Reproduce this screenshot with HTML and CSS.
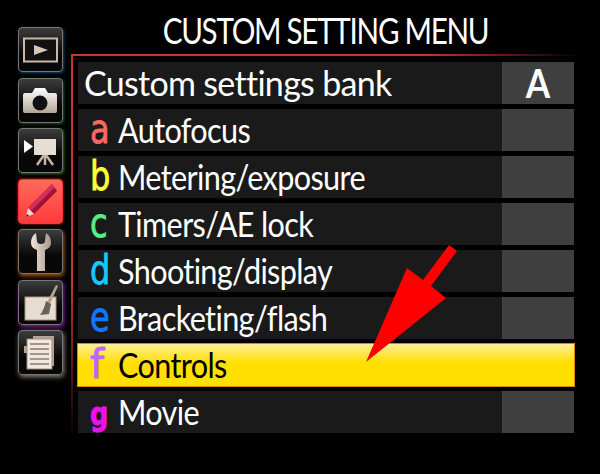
FILE: index.html
```html
<!DOCTYPE html>
<html lang="en">
<head>
  <meta charset="UTF-8" />
  <meta name="viewport" content="width=device-width, initial-scale=1.0"/>
  <title>Custom Setting Menu</title>
  <link rel="stylesheet" href="styles.css">
</head>
<body>
  <div class="screen">
    <!-- Menu tabs -->
    <div class="tabs">
      <div class="tab tab-play">
        <svg viewBox="0 0 43 43"><rect x="5" y="10.500" width="33" height="23" fill="#111" stroke="#cdb8a8" stroke-width="2"/><path d="M15 17 L29 22 L15 27Z" fill="#d8c6b6"/></svg>
      </div>
      <div class="tab tab-shoot">
        <svg viewBox="0 0 43 43"><defs><linearGradient id="metal" x1="0" y1="0" x2="0" y2="1"><stop offset="0" stop-color="#fff"/><stop offset="1" stop-color="#b5a594"/></linearGradient></defs><path d="M6 14 H13 L16 9 H26 L29 14 H36 Q38 14 38 16 V32 Q38 34 36 34 H6 Q4 34 4 32 V16 Q4 14 6 14Z" fill="url(#metal)"/><circle cx="21" cy="24" r="7.500" fill="#111"/></svg>
      </div>
      <div class="tab tab-movie">
        <svg viewBox="0 0 43 43"><path d="M5 11 L14 17.500 L5 24Z" fill="#fff"/><rect x="15" y="10" width="22" height="16" fill="#e8ddd2"/><path d="M25 26 L18 36 M26 26 V36 M27 26 L34 36" stroke="#c5b5a5" stroke-width="2.500" fill="none"/></svg>
      </div>
      <div class="tab tab-custom">
        <svg viewBox="0 0 43 43"><path d="M33 4 L38 11 L15 34 L9 28Z" fill="#a01038"/><path d="M33 4 L35.500 7.500 L12 31 L9 28Z" fill="#d0305a"/><path d="M9 28 L15 34 L7 37Z" fill="#f0d8c0"/><path d="M8 34 L10 35.800 L7 37Z" fill="#222"/></svg>
      </div>
      <div class="tab tab-setup">
        <svg viewBox="0 0 43 43"><defs><linearGradient id="steel" x1="0" y1="0" x2="1" y2="0"><stop offset="0" stop-color="#efe5da"/><stop offset="1" stop-color="#a89888"/></linearGradient></defs><path d="M17 3 L18 11 Q18 14 22 14 Q26 14 26 11 L27 3 Q32 6 32 13 Q32 18 26 20 L26 41 H18 L18 20 Q12 18 12 13 Q12 6 17 3Z" fill="url(#steel)"/></svg>
      </div>
      <div class="tab tab-retouch">
        <svg viewBox="0 0 43 43"><rect x="6" y="16" width="31" height="23" fill="#e6dcd2" stroke="#a89888"/><path d="M37 4 L39 5 L31 23 L28 21Z" fill="#b5a594"/><path d="M27 20 L32 23 L30 33 L21 34 Q25 29 27 20Z" fill="#6a6058"/></svg>
      </div>
      <div class="tab tab-recent">
        <svg viewBox="0 0 43 43"><rect x="14" y="5" width="21" height="30" fill="#b5a594"/><rect x="5" y="15" width="4" height="7" fill="#b5a594"/><rect x="8" y="8" width="25" height="30" fill="#f0e8e0" stroke="#a08c7c"/><path d="M11 13 H30 M11 18 H30 M11 23 H30 M11 28 H30 M11 33 H30" stroke="#8a7a6c" stroke-width="1.500"/></svg>
      </div>
    </div>

    <div class="main">
      <h1 class="title">CUSTOM SETTING MENU</h1>
      <div class="menu">
        <div class="row row-bank">
          <div class="row-text">Custom settings bank</div>
          <div class="row-value"><span class="value-mark">A</span></div>
        </div>
        <div class="row">
          <div class="row-text"><span class="key key-a">a</span><span class="label">Autofocus</span></div>
          <div class="row-value"></div>
        </div>
        <div class="row">
          <div class="row-text"><span class="key key-b">b</span><span class="label">Metering/exposure</span></div>
          <div class="row-value"></div>
        </div>
        <div class="row">
          <div class="row-text"><span class="key key-c">c</span><span class="label">Timers/AE lock</span></div>
          <div class="row-value"></div>
        </div>
        <div class="row">
          <div class="row-text"><span class="key key-d">d</span><span class="label">Shooting/display</span></div>
          <div class="row-value"></div>
        </div>
        <div class="row">
          <div class="row-text"><span class="key key-e">e</span><span class="label">Bracketing/flash</span></div>
          <div class="row-value"></div>
        </div>
        <div class="row row-active">
          <div class="row-text"><span class="key key-f">f</span><span class="label">Controls</span></div>
        </div>
        <div class="row">
          <div class="row-text"><span class="key key-g">g</span><span class="label">Movie</span></div>
          <div class="row-value"></div>
        </div>
      </div>
    </div>

    <!-- Red pointer -->
    <svg class="arrow" viewBox="0 0 600 474"><path d="M366 362 L407 268 L423 280 L449 245 L457 251 L431 286 L446 298Z" fill="#f00"/></svg>
  </div>
</body>
</html>
```

FILE: styles.css
```css
html, body { margin: 0; padding: 0; background: #000; }

.screen {
  position: relative;
  display: flex;
  width: 600px;
  height: 474px;
  overflow: hidden;
  font-family: Lato, sans-serif;
  color: #fff;
}

/* Tabs */
.tabs {
  display: flex;
  flex-direction: column;
  gap: 5.5px;
  width: 53px;
  padding: 27px 0 0 18px;
}
.tab {
  box-sizing: border-box;
  width: 45px;
  height: 45px;
  border: 1px solid #777;
  border-radius: 4px;
  background: linear-gradient(#3c3c3c, #080808 60%);
}
.tab svg { display: block; width: 43px; height: 43px; }
.tab-play { box-shadow: 1px 1px 3px #0a4a78; }
.tab-shoot { box-shadow: 1px 1px 3px #0c5a1c; }
.tab-movie { box-shadow: 1px 1px 3px #386a10; }
.tab-custom {
  border-color: #f33;
  background: linear-gradient(#ff6a5a, #ff3a3a);
  box-shadow: 0 0 3px #d22;
}
.tab-setup { box-shadow: 1px 2px 4px #a05a10; }
.tab-retouch { box-shadow: 1px 2px 4px #8a1a9a; }
.tab-recent { box-shadow: 1px 2px 5px #8a8478; }

/* Main column */
.main { display: flex; flex-direction: column; width: 509px; }
.title {
  height: 54px;
  margin: 0;
  font-size: 37px;
  font-weight: 400;
  line-height: 59px;
  text-align: center;
  white-space: nowrap;
  letter-spacing: -1.6px;
  transform: scaleX(0.8);
}

.menu {
  display: flex;
  flex-direction: column;
  gap: 5px;
  height: 385px;
  box-sizing: border-box;
  padding: 8px 6px 0 7px;
  background:
    linear-gradient(to right, #c83232 70%, #000) top left / 100% 2px no-repeat,
    linear-gradient(#c83232 60%, #000) top left / 2px 100% no-repeat;
}

.row {
  display: flex;
  flex: none;
  height: 42px;
  background: #1a1a1a;
}
.row-text {
  display: flex;
  flex: 1;
  align-items: baseline;
  font-size: 34px;
  line-height: 41px;
  letter-spacing: -0.7px;
  white-space: nowrap;
}
.row-bank .row-text { padding-left: 6px; }
.row-value {
  width: 72px;
  background: #3f3f3f;
  line-height: 42px;
  text-align: center;
}
.value-mark {
  display: inline-block;
  font-size: 40px;
  font-weight: 700;
  transform: scaleX(0.88);
}

.label {
  transform: scaleX(0.9);
  transform-origin: left;
}

.key {
  width: 28px;
  margin-left: 12px;
  font-family: "DejaVu Sans", sans-serif;
  font-size: 40px;
  letter-spacing: 0;
  transform: scaleX(0.8);
  transform-origin: left;
  -webkit-text-stroke: 0.8px;
}
.key-a { color: #ff6666; }
.key-b { color: #ffff33; }
.key-c { color: #55ee88; }
.key-d { color: #11ccff; }
.key-e { color: #1177ff; }
.key-f { color: #bb66ff; transform: none; }
.key-g { color: #ee11ee; font-size: 32px; font-weight: 700; }

.row-active {
  background: linear-gradient(#ffee99, #ffdf00 45%);
  box-shadow: 0 0 0 1px #d98a00;
  color: #000;
}

.arrow {
  position: absolute;
  top: 0;
  left: 0;
  width: 600px;
  height: 474px;
}
```
